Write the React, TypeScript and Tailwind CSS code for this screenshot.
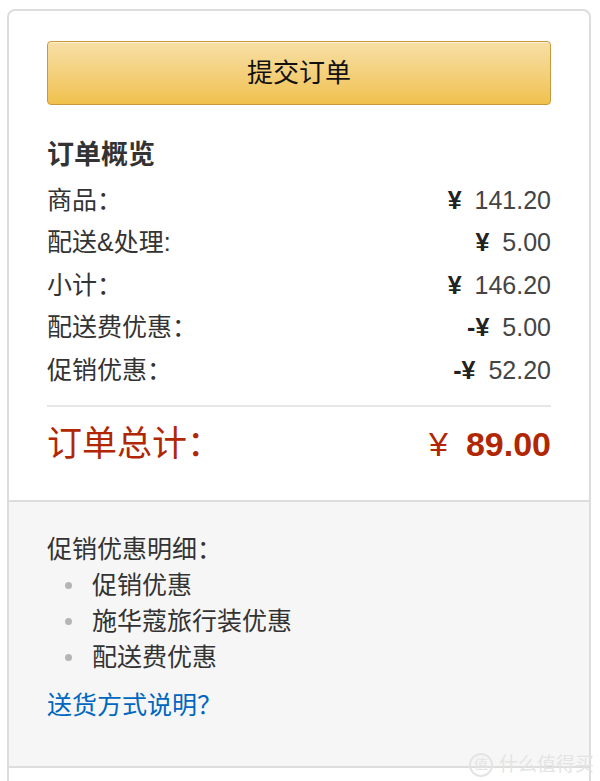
const font = "font-['Liberation_Sans','Noto_Sans_CJK_SC',sans-serif]";

const rows = [
  { label: "商品：", sign: "", value: "141.20" },
  { label: "配送&处理:", sign: "", value: "5.00" },
  { label: "小计：", sign: "", value: "146.20" },
  { label: "配送费优惠：", sign: "-", value: "5.00" },
  { label: "促销优惠：", sign: "-", value: "52.20" },
];

const promos = ["促销优惠", "施华蔻旅行装优惠", "配送费优惠"];

export default function App() {
  return (
    <div className={`relative h-[781px] overflow-hidden bg-white pl-[7px] pr-[9px] pt-[9px] ${font}`}>
      <div className="h-[800px] rounded-t-[8px] border-2 border-[#dddddd]">
        {/* summary */}
        <div className="px-[38px] pt-[30px] pb-[30px]">
          <button className="flex h-[64px] w-full items-center justify-center rounded-[4px] border border-[#c69a3a] bg-gradient-to-b from-[#f7dfa5] to-[#f0c14b] text-[26px] text-[#111] shadow-[inset_0_1px_0_rgba(255,255,255,0.5)]">
            提交订单
          </button>

          <div className="mt-[33px] flex h-[34px] items-center text-[27px] font-bold text-[#333]">订单概览</div>

          <div className="mt-[7px]">
            {rows.map((r) => (
              <div key={r.label} className="flex h-[42.5px] items-center justify-between text-[25px] text-[#333]">
                <span>{r.label}</span>
                <span className="flex items-center">
                  <span className="text-[25px] font-bold text-[#222]">{r.sign}¥</span>
                  <span className="ml-[13px] text-[25px] text-[#444]">{r.value}</span>
                </span>
              </div>
            ))}
          </div>

          <div className="mt-[13px] h-[2px] bg-[#e7e7e7]" />

          <div className="mt-[13px] flex h-[50px] items-center justify-between text-[#b12704]">
            <span className="text-[35px]">订单总计：</span>
            <span className="flex items-center">
              <span className="text-[34px]">¥</span>
              <span className="ml-[18px] text-[34px] font-bold">89.00</span>
            </span>
          </div>
        </div>

        {/* promo details */}
        <div className="border-y-2 border-[#dddddd] bg-[#f6f6f6] px-[38px] pt-[30px] pb-[42px]">
          <div className="flex h-[36px] items-center text-[25px] text-[#333]">促销优惠明细：</div>
          <ul>
            {promos.map((p) => (
              <li key={p} className="flex h-[36px] items-center text-[25px] text-[#333]">
                <span className="ml-[18px] mr-[20px] h-[7px] w-[7px] rounded-full bg-[#b5b5b5]" />
                {p}
              </li>
            ))}
          </ul>
          <a className="mt-[12px] flex h-[36px] items-center text-[25px] text-[#0066c0]">送货方式说明？</a>
        </div>
      </div>

      {/* watermark */}
      <div className="pointer-events-none absolute right-[6px] bottom-[2px] flex items-center gap-[6px] text-[#e4e4e4]">
        <span className="flex h-[24px] w-[24px] items-center justify-center rounded-full border-2 border-[#e4e4e4] text-[14px]">值</span>
        <span className="text-[19px]">什么值得买</span>
      </div>
    </div>
  );
}
